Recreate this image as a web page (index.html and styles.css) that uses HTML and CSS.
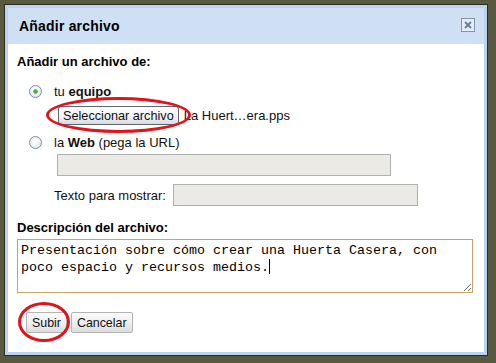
FILE: index.html
```html
<!DOCTYPE html>
<html lang="es">
<head>
    <meta charset="UTF-8">
    <meta name="viewport" content="width=device-width, initial-scale=1.0">
    <title>Añadir archivo</title>
    <link rel="stylesheet" href="styles.css">
</head>
<body>
    <div class="dialog">
        <div class="frame">
            <div class="titlebar">
                <span class="title">Añadir archivo</span>
                <span class="close">
                    <svg width="14" height="14" viewBox="0 0 14 14">
                        <rect x="0.5" y="0.5" width="13" height="13" fill="#e3ecf8" stroke="#8795ab"/>
                        <path d="M4 4 L10 10 M10 4 L4 10" stroke="#6d7b93" stroke-width="1.8"/>
                    </svg>
                </span>
            </div>

            <div class="content">
                <div class="section-label first">Añadir un archivo de:</div>

                <label class="option first-option">
                    <input type="radio" name="source" checked>
                    <span>tu <b>equipo</b></span>
                </label>

                <div class="file-row">
                    <span class="mark-wrap">
                        <button class="btn file-btn">Seleccionar archivo</button>
                        <span class="ring ring-file"></span>
                    </span>
                    <span class="file-name">La Huert…era.pps</span>
                </div>

                <label class="option second-option">
                    <input type="radio" name="source">
                    <span>la <b>Web</b> (pega la URL)</span>
                </label>

                <input class="field url-field" type="text" disabled>

                <div class="text-row">
                    <span>Texto para mostrar:</span>
                    <input class="field text-field" type="text" disabled>
                </div>

                <div class="section-label second">Descripción del archivo:</div>
                <div class="desc">Presentación sobre cómo crear una Huerta Casera, con poco espacio y recursos medios.<span class="caret"></span></div>

                <div class="actions">
                    <span class="mark-wrap">
                        <button class="btn action-btn">Subir</button>
                        <span class="ring ring-submit"></span>
                    </span>
                    <button class="btn action-btn">Cancelar</button>
                </div>
            </div>
        </div>
    </div>
</body>
</html>
```

FILE: styles.css
```css
html, body {
    margin: 0;
    height: 100%;
}
body {
    background: #59593f;
    padding: 4px;
    box-sizing: border-box;
    font-family: "Liberation Sans", Arial, sans-serif;
    font-size: 13px;
    color: #111;
    overflow: hidden;
}
.dialog {
    width: 484px;
    height: 352px;
    box-sizing: border-box;
    border: 1px solid #2b2b24;
}
.frame {
    height: 100%;
    box-sizing: border-box;
    border: 3px solid #bcd3f0;
    background: #fff;
    display: flex;
    flex-direction: column;
}
.titlebar {
    height: 36px;
    background: #cfe0f5;
    display: flex;
    align-items: center;
    justify-content: space-between;
    padding: 0 9px 0 11px;
    flex-shrink: 0;
}
.title {
    font-size: 14px;
    font-weight: bold;
    color: #000;
    letter-spacing: 0.2px;
}
.close {
    display: flex;
    margin-top: -2px;
}
.content {
    padding: 0 9px;
}
.section-label {
    font-weight: bold;
    line-height: 16px;
    color: #000;
}
.section-label.first {
    margin-top: 10px;
}
.section-label.second {
    margin-top: 14px;
}
.option {
    display: flex;
    align-items: center;
    height: 16px;
    gap: 12px;
    padding-left: 12px;
}
.first-option {
    margin-top: 13px;
}
.second-option {
    margin-top: 9px;
}
.option input {
    appearance: none;
    margin: 0;
    width: 13px;
    height: 13px;
    border: 1px solid #7a8ca3;
    border-radius: 50%;
    box-sizing: border-box;
    background: radial-gradient(circle at 45% 40%, #ffffff 0, #f2f4f6 40%, #d6dce3 100%);
}
.option input:checked {
    background:
        radial-gradient(circle, #3f9e3f 0, #5cbc5c 2px, transparent 2.6px),
        radial-gradient(circle at 45% 40%, #ffffff 0, #f2f4f6 40%, #d6dce3 100%);
}
.file-row {
    display: flex;
    align-items: baseline;
    gap: 5px;
    margin-top: 7px;
    padding-left: 41px;
}
.mark-wrap {
    position: relative;
    display: inline-flex;
}
.btn {
    font-family: "Liberation Sans", Arial, sans-serif;
    font-size: 13px;
    color: #111;
    cursor: pointer;
    margin: 0;
}
.file-btn {
    height: 19px;
    padding: 0 4px;
    font-size: 12.7px;
    border: 1px solid #5d6673;
    border-radius: 3px;
    background: linear-gradient(#ffffff, #f2f2f5 60%, #d8dae3);
}
.file-name {
    color: #111;
}
.ring {
    position: absolute;
    border: 3px solid #e0141a;
    border-radius: 50%;
    box-sizing: border-box;
    pointer-events: none;
}
.ring-file {
    left: -12px;
    top: -9px;
    width: 145px;
    height: 36px;
}
.ring-submit {
    left: -8px;
    top: -10px;
    width: 52px;
    height: 40px;
}
.field {
    display: block;
    height: 22px;
    box-sizing: border-box;
    margin: 0;
    border: 1px solid #aeb1b0;
    background: #ebeae4;
}
.url-field {
    width: 334px;
    margin: 4px 0 0 40px;
}
.text-row {
    display: flex;
    align-items: center;
    gap: 7px;
    margin-top: 8px;
    padding-left: 37px;
}
.text-field {
    width: 245px;
}
.desc {
    margin-top: 3px;
    width: 456px;
    height: 54px;
    box-sizing: border-box;
    border: 1px solid #c4a65e;
    padding: 3px 3px 0;
    font-family: "Liberation Mono", "Courier New", monospace;
    font-size: 13.33px;
    line-height: 16px;
    color: #000;
    overflow: auto;
    resize: both;
}
.caret {
    display: inline-block;
    width: 1px;
    height: 15px;
    background: #000;
    vertical-align: -3px;
}
.actions {
    display: flex;
    gap: 4px;
    margin-top: 19px;
    padding-left: 9px;
}
.action-btn {
    height: 21px;
    padding: 0 5px;
    font-size: 12.4px;
    border: 1px solid #b4b4b4;
    border-radius: 2px;
    background: linear-gradient(#fbfbfb, #ececec 60%, #dcdcdc);
}
```
